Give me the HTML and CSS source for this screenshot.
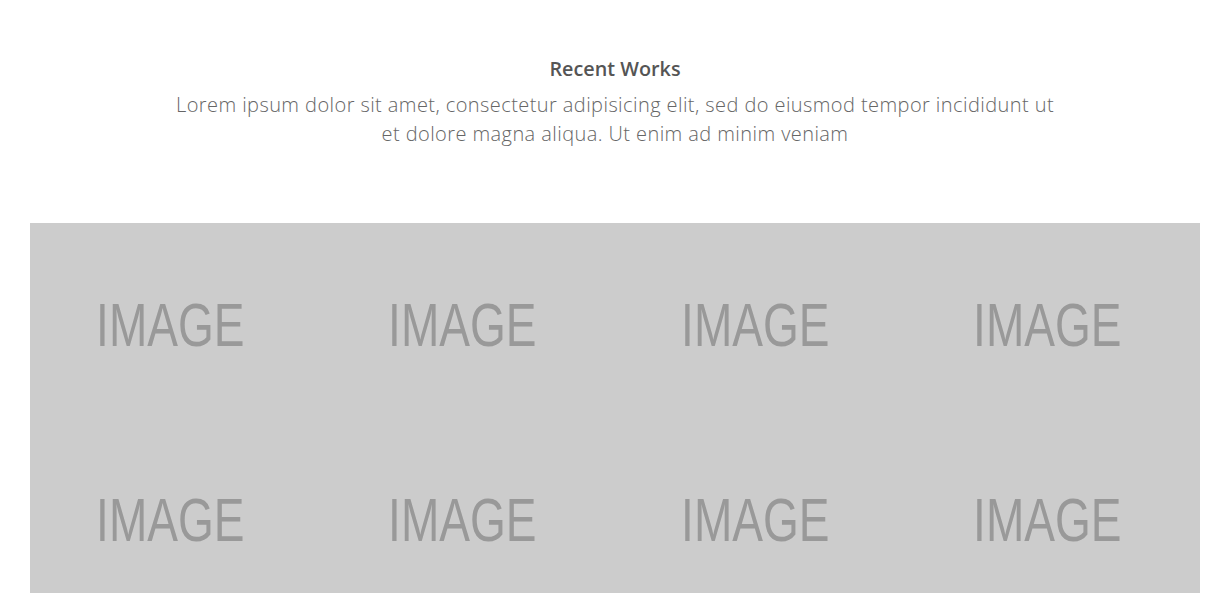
FILE: index.html
```html
<!DOCTYPE html>
<html>
<head>
<meta charset="utf-8">
<link rel="stylesheet" href="styles.css">
</head>
<body>
<section class="works">
  <header class="intro">
    <h2 class="title">Recent Works</h2>
    <p class="lead">Lorem ipsum dolor sit amet, consectetur adipisicing elit, sed do eiusmod tempor incididunt ut et dolore magna aliqua. Ut enim ad minim veniam</p>
  </header>
  <div class="gallery">
    <div class="tile"><span class="ph">IMAGE</span></div>
    <div class="tile"><span class="ph">IMAGE</span></div>
    <div class="tile"><span class="ph">IMAGE</span></div>
    <div class="tile"><span class="ph">IMAGE</span></div>
    <div class="tile"><span class="ph">IMAGE</span></div>
    <div class="tile"><span class="ph">IMAGE</span></div>
    <div class="tile"><span class="ph">IMAGE</span></div>
    <div class="tile"><span class="ph">IMAGE</span></div>
  </div>
</section>
</body>
</html>
```
FILE: styles.css
```css
html, body {
  margin: 0;
  padding: 0;
  background: #fff;
  overflow: hidden;
}
body {
  font-family: "Open Sans", "Noto Sans", sans-serif;
}
.works {
  padding: 56px 26px 0 30px;
}
.intro {
  text-align: center;
  display: flex;
  flex-direction: column;
  align-items: center;
}
.title {
  margin: 0;
  font-size: 19.8px;
  font-weight: 600;
  color: #555;
  line-height: 26px;
}
.lead {
  margin: 8px 0 0;
  max-width: 890px;
  font-size: 20px;
  font-weight: 300;
  letter-spacing: 0.42px;
  line-height: 29px;
  color: #666;
}
.gallery {
  margin-top: 75px;
  background: #ccc;
  display: grid;
  grid-template-columns: repeat(4, 1fr);
  grid-auto-rows: 195px;
}
.tile {
  display: flex;
  align-items: center;
  justify-content: center;
  padding: 9px 12px 0 0;
}
.ph {
  font-family: "Liberation Sans", Arial, sans-serif;
  font-size: 61px;
  color: #999;
  line-height: 1;
  display: inline-block;
  transform: scaleX(0.755);
}
```
